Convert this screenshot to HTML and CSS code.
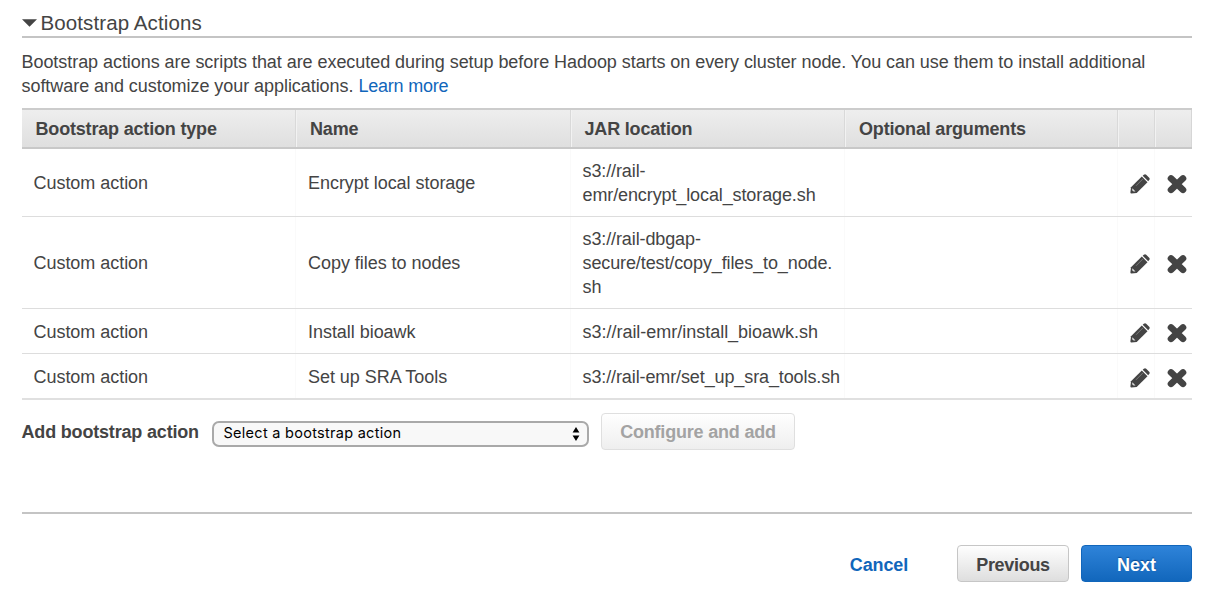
FILE: index.html
```html
<!DOCTYPE html>
<html lang="en">
<head>
<meta charset="utf-8">
<title>Bootstrap Actions</title>
<link rel="stylesheet" href="styles.css">
</head>
<body>
<svg class="symbols" width="0" height="0">
  <symbol id="pencil" viewBox="0 0 20 20">
    <path d="M1 13.3 11.8 2.5 17.5 8.2 6.7 19 1.4 19.4Q.4 19.4.4 18.4Z"/>
    <path d="M12.7 1.8 13.8.8Q15-.2 16.2.7L19.2 3.7Q20.2 4.9 19.2 6.1L18.2 7.2Z"/>
    <path d="M6 11.8 13 4.8" fill="none" stroke="#888" stroke-width=".8"/>
    <path d="M2.4 14.3 5.5 17.4 3.6 17.6 2.1 16.2Z" fill="#ddd"/>
  </symbol>
  <symbol id="remove" viewBox="0 0 20 20">
    <path d="M4 4.4 16 15.8M16 4.4 4 15.8" stroke="currentColor" stroke-width="6.6" stroke-linecap="round"/>
  </symbol>
</svg>
<main class="page">
  <h2 class="title"><svg class="caret" viewBox="0 0 16 8"><path d="M0 0H16L8 8Z"/></svg><span>Bootstrap Actions</span></h2>
  <p class="intro">Bootstrap actions are scripts that are executed during setup before Hadoop starts on every cluster node. You can use them to install additional<br>software and customize your applications. <a class="link">Learn more</a></p>
  <div class="table">
    <div class="row head"><div>Bootstrap action type</div><div>Name</div><div>JAR location</div><div>Optional arguments</div><div></div><div></div></div>
    <div class="row two-lines"><div>Custom action</div><div>Encrypt local storage</div><div class="jar">s3://rail-<br>emr/encrypt_local_storage.sh</div><div></div><div class="tool"><svg><use href="#pencil"/></svg></div><div class="tool"><svg><use href="#remove"/></svg></div></div>
    <div class="row three-lines"><div>Custom action</div><div>Copy files to nodes</div><div class="jar">s3://rail-dbgap-<br>secure/test/copy_files_to_node.<br>sh</div><div></div><div class="tool"><svg><use href="#pencil"/></svg></div><div class="tool"><svg><use href="#remove"/></svg></div></div>
    <div class="row single"><div>Custom action</div><div>Install bioawk</div><div class="jar wide">s3://rail-emr/install_bioawk.sh</div><div></div><div class="tool"><svg><use href="#pencil"/></svg></div><div class="tool"><svg><use href="#remove"/></svg></div></div>
    <div class="row single last"><div>Custom action</div><div>Set up SRA Tools</div><div class="jar">s3://rail-emr/set_up_sra_tools.sh</div><div></div><div class="tool"><svg><use href="#pencil"/></svg></div><div class="tool"><svg><use href="#remove"/></svg></div></div>
  </div>
  <div class="add">
    <span class="label">Add bootstrap action</span>
    <div class="select"><span>Select a bootstrap action</span><svg class="arrows" viewBox="0 0 8 14"><path d="M4 0 7.4 5.6H.6ZM4 14 .6 8.4H7.4Z"/></svg></div>
    <button class="btn disabled">Configure and add</button>
  </div>
  <footer class="footer">
    <a class="link cancel">Cancel</a>
    <button class="btn previous">Previous</button>
    <button class="btn next">Next</button>
  </footer>
</main>
</body>
</html>
```
FILE: styles.css
```css
* { box-sizing: border-box; }
body { margin: 0; background: #fff; color: #444; font: 18px/24px "Liberation Sans", Arial, sans-serif; }
.symbols { display: block; height: 0; }
.page { width: 1170.5px; margin-left: 21.5px; padding-top: 10px; }
.title { display: flex; align-items: center; gap: 4px; height: 28px; margin: 0; border-bottom: 2px solid #c4c4c4; font-size: 20.5px; font-weight: 400; letter-spacing: .1px; white-space: nowrap; }
.caret { width: 15px; height: 8px; fill: #444; }
.intro { margin: 12px 0 0; height: 58px; font-size: 18px; letter-spacing: -.055px; white-space: nowrap; }
.link { color: #1166bb; }
.intro .link { letter-spacing: -.2px; }
.row { display: grid; grid-template-columns: 274.5px 274.5px 274.5px 273px 37px 37px; height: 45px; border-bottom: 1px solid #ddd; letter-spacing: -.04px; }
.row > div { display: flex; align-items: center; padding-left: 12px; border-right: 1px solid #fafafa; white-space: nowrap; }
.row > div:last-child { border-right: 0; }
.row > .jar { letter-spacing: -.11px; }
.row > .wide { letter-spacing: -.02px; }
.head { height: 41px; border-top: 2px solid #ccc; border-bottom: 2px solid #c8c8c8; background: linear-gradient(#eee, #dfdfdf); font-weight: 700; letter-spacing: -.18px; }
.head > div { padding-left: 14px; border-right: 1px solid #d9d9d9; box-shadow: 1px 0 #f2f2f2; }
.head > div:last-child { box-shadow: none; border-right: 1px solid #d6d6d6; }
.two-lines { height: 68px; }
.three-lines { height: 92px; }
.single > div { padding-top: 2px; }
.last { height: 46px; border-bottom: 2px solid #e0e0e0; }
.row > .tool { padding: 3px 0 0 12px; }
.tool svg { width: 20px; height: 20px; fill: #444; color: #444; }
.add { display: flex; align-items: center; height: 36px; margin-top: 14px; }
.label { width: 190.5px; font-weight: 700; letter-spacing: -.18px; white-space: nowrap; }
.select { display: flex; align-items: center; justify-content: space-between; width: 377px; height: 26px; margin: 4px 12px 0 0; padding: 0 7px 2px 9.5px; border: 2px solid #a9a9a9; border-radius: 7px; background: #f8f8f8; color: #000; font: 14.5px/20px Inter, sans-serif; letter-spacing: .28px; white-space: nowrap; }
.arrows { width: 8px; height: 14px; margin-top: 2px; }
.btn { height: 37px; padding: 0; border: 1.5px solid #c6c6c6; border-radius: 4px; background: linear-gradient(#fff, #ddd) border-box; color: #444; font: 700 18px/24px "Liberation Sans", Arial, sans-serif; letter-spacing: -.2px; white-space: nowrap; }
.disabled { width: 194px; margin-top: -1px; border-color: #dfdfdf; background: linear-gradient(#fff, #eee) border-box; color: #a3a3a3; }
.footer { display: flex; align-items: center; justify-content: flex-end; margin-top: 62px; padding-top: 31px; border-top: 2px solid #c4c4c4; }
.cancel { margin: 2px 49px 0 0; font-weight: 700; letter-spacing: -.15px; }
.previous { width: 112px; margin-right: 12px; padding-top: 2px; letter-spacing: -.3px; }
.next { width: 111px; padding-top: 2px; border-color: #1166bb; background: linear-gradient(#2f84da, #1166bb) border-box; color: #fff; letter-spacing: 0; text-shadow: 0 -1px 1px #0c4c90; }
```
